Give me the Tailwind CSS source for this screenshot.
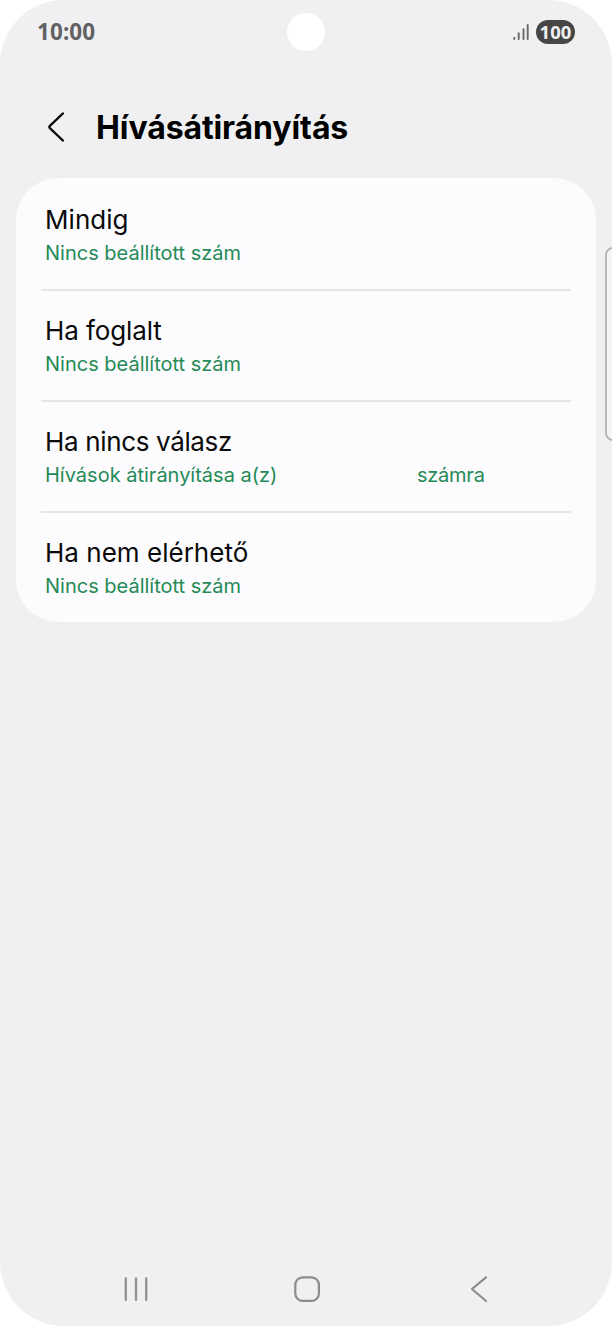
<!DOCTYPE html>
<html lang="hu">
<head>
<meta charset="utf-8">
<title>Hívásátirányítás</title>
<script src="https://cdn.jsdelivr.net/npm/@tailwindcss/browser@4"></script>
</head>
<body class="bg-white font-['Inter','Roboto',sans-serif]">
<div class="relative flex h-[1326px] w-[612px] flex-col overflow-hidden rounded-[64px] bg-[#f0f0f2]">
  <header class="grid h-16 grid-cols-3 items-center pr-[37px] pl-[37px]">
    <span class="font-['Noto_Sans',sans-serif] text-[22.5px] leading-none font-bold tracking-[0.1px] text-[#626264]">10:00</span>
    <span class="size-[38px] justify-self-center rounded-full bg-white"></span>
    <div class="flex items-center justify-end gap-[7px]">
      <svg class="h-[18px] w-[18px]" viewBox="0 0 18 18" fill="none" stroke="#68686a" stroke-width="1.9" stroke-linecap="round"><path d="M3.3 14.8v1.2M7.7 10.2V16M12.5 6.2V16M16.7 2V16"/></svg>
      <span class="flex h-6 w-[39px] items-center justify-center rounded-full bg-[#464646] font-['Noto_Sans',sans-serif] text-[18.5px] leading-none font-bold text-[#f0f0f2]">100</span>
    </div>
  </header>
  <div class="flex h-[114px] items-center pt-[12px] pl-[47px]">
    <svg class="h-8 w-[18px]" viewBox="0 0 18 32" fill="none" stroke="#0a0a0a" stroke-width="2.2" stroke-linecap="round" stroke-linejoin="round"><path d="M16 2.4 2.6 15.1Q1.8 16 2.6 16.9L16 29.6"/></svg>
    <h1 class="ml-[31px] pt-px text-[32px] leading-none font-bold tracking-[-0.1px] text-black">Hívásátirányítás</h1>
  </div>
  <main class="mx-4 h-[444px] w-[580px] rounded-[42px] bg-[#fcfcfe] px-[25px]">
    <section class="h-[111px] pt-[25px] pl-1">
      <h2 class="text-[26px] leading-[34px] tracking-[0.05px] text-[#0a0a0a]">Mindig</h2>
      <p class="text-[20px] leading-8 text-[#258a57]">Nincs beállított szám</p>
    </section>
    <section class="h-[111px] border-t-2 border-[#e6e6e8] pt-[23px] pl-1">
      <h2 class="text-[26px] leading-[34px] tracking-[-0.1px] text-[#0a0a0a]">Ha foglalt</h2>
      <p class="text-[20px] leading-8 text-[#258a57]">Nincs beállított szám</p>
    </section>
    <section class="h-[111px] border-t-2 border-[#e6e6e8] pt-[23px] pl-1">
      <h2 class="text-[26px] leading-[34px] tracking-[-0.35px] text-[#0a0a0a]">Ha nincs válasz</h2>
      <p class="flex text-[20px] leading-8 text-[#258a57]"><span class="w-[372px]">Hívások átirányítása a(z)</span><span class="tracking-[-0.25px]">számra</span></p>
    </section>
    <section class="h-[111px] border-t-2 border-[#e6e6e8] pt-[23px] pl-1">
      <h2 class="text-[26px] leading-[34px] tracking-[0.02px] text-[#0a0a0a]">Ha nem elérhető</h2>
      <p class="text-[20px] leading-8 text-[#258a57]">Nincs beállított szám</p>
    </section>
  </main>
  <span class="absolute top-[247px] left-[604.5px] h-[194px] w-5 rounded-[8px] border-2 border-[#b8b8ba] bg-[#f4f4f5]"></span>
  <nav class="mt-auto mb-[23px] flex h-7 items-center pl-[123px]">
    <svg class="h-7 w-[26px]" viewBox="0 0 26 28" fill="none" stroke="#909092" stroke-width="2.3" stroke-linecap="round"><path d="M2.8 3.5v21.4M13 3.5v21.4M23.2 3.5v21.4"/></svg>
    <svg class="ml-[144px] size-7" viewBox="0 0 28 28" fill="none" stroke="#8c8c8e" stroke-width="2.2"><rect x="2.3" y="2.3" width="23.6" height="23.6" rx="7.5"/></svg>
    <svg class="ml-[148px] h-7 w-5" viewBox="0 0 20 28" fill="none" stroke="#8c8c8e" stroke-width="2.2" stroke-linecap="round" stroke-linejoin="round"><path d="M17 2.4 3 14l14 12"/></svg>
  </nav>
</div>
</body>
</html>
